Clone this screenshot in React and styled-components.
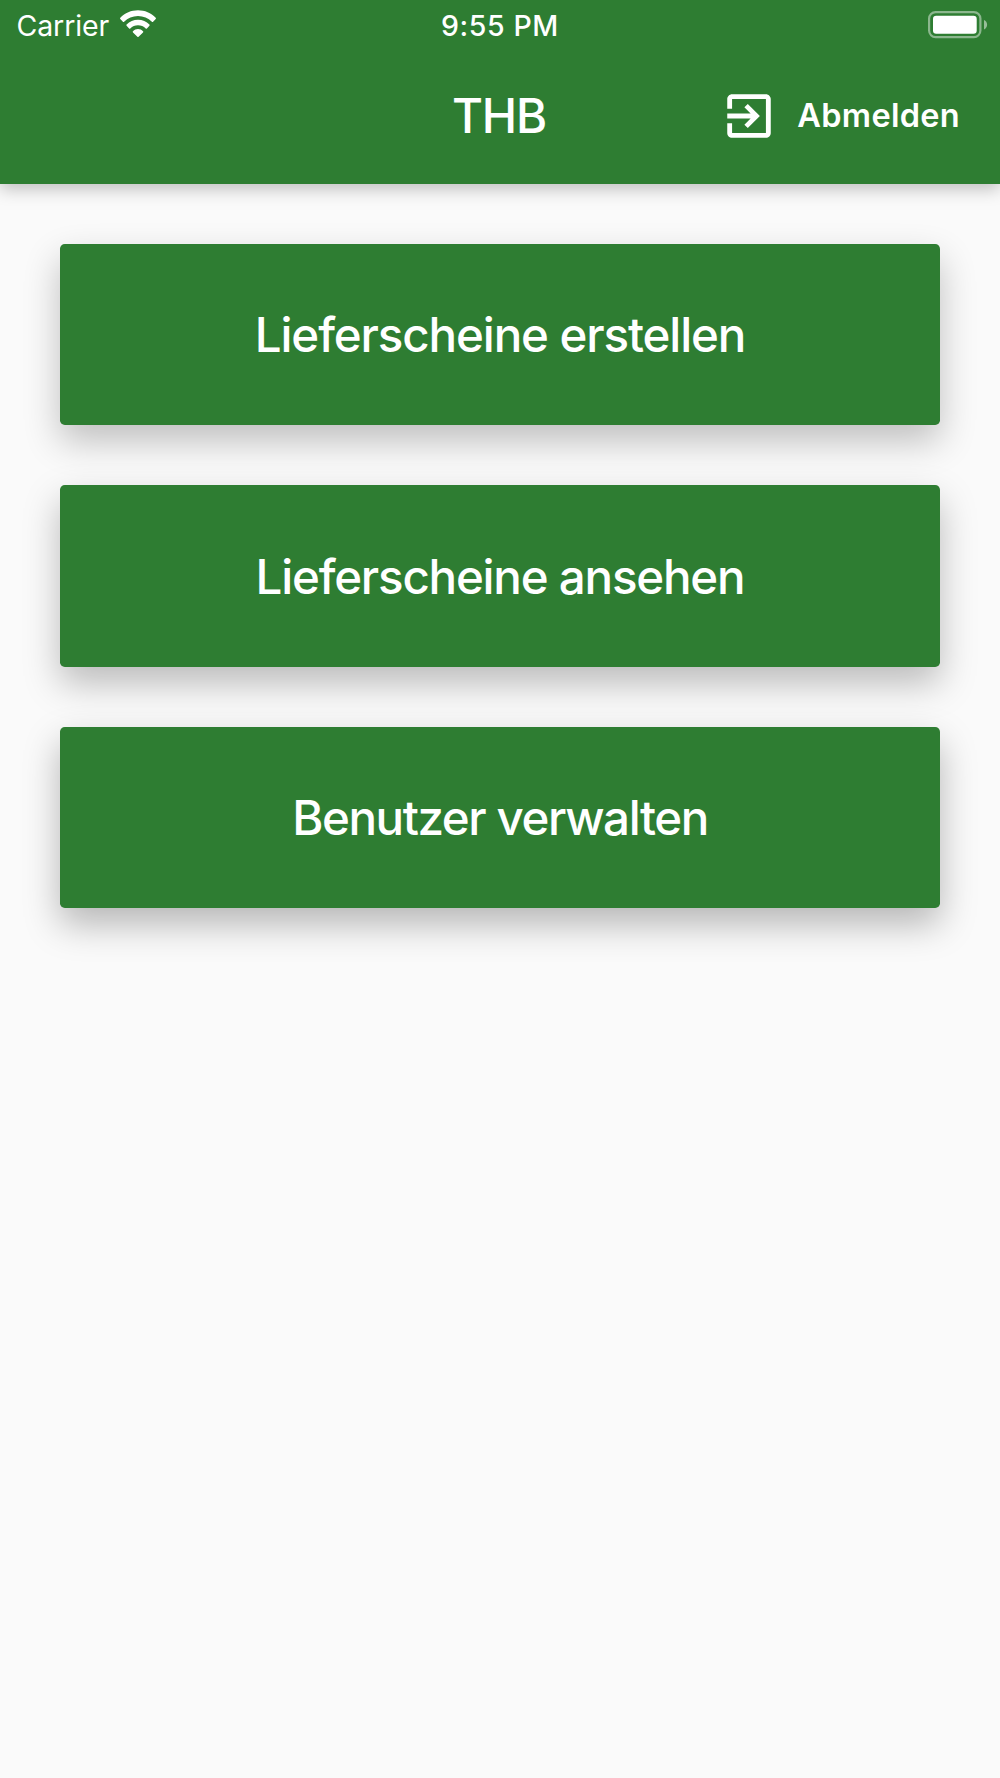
import React from 'react'
import styled, { createGlobalStyle } from 'styled-components'

const menuItems = [
  { id: 'create', label: 'Lieferscheine erstellen', spacing: '-1.12px', shade: 0.24 },
  { id: 'view', label: 'Lieferscheine ansehen', spacing: '-1.22px', shade: 0.26 },
  { id: 'users', label: 'Benutzer verwalten', spacing: '-1.43px', shade: 0.28 },
]

const WifiIcon = () => (
  <WifiSvg viewBox="0 0 36 27" fill="#fff">
    <path d="M.3 8.900Q-.3 8.300.3 7.700C5 2.900 11.200.2 18 .2s13 2.700 17.700 7.500q.6.6 0 1.200l-2.600 2.800q-.6.6-1.200 0C28.200 8 23.400 5.900 18 5.900S7.800 8 4.100 11.700q-.6.6-1.200 0z" />
    <path d="M6.600 15.800q-.6-.6 0-1.200c3-3.100 6.900-4.900 11.400-4.900s8.400 1.800 11.400 4.900q.6.6 0 1.200l-2.500 2.600q-.6.6-1.200 0c-2.100-2-4.700-3.100-7.700-3.100s-5.600 1.100-7.700 3.100q-.6.6-1.200 0z" />
    <path d="M13 22.400q-.6-.6 0-1.200c1.400-1.400 3.100-2.200 5-2.200s3.600.8 5 2.200q.6.6 0 1.200l-4.400 4.300q-.6.500-1.200 0z" />
  </WifiSvg>
)

const BatteryIcon = () => (
  <BatterySvg viewBox="0 0 60 28">
    <rect
      x="1.100"
      y="1.100"
      width="51.300"
      height="25"
      rx="6.500"
      fill="none"
      stroke="#fff"
      strokeOpacity="0.45"
      strokeWidth="2.200"
    />
    <rect x="5" y="4.700" width="43.700" height="18" rx="3.200" fill="#fff" />
    <path d="M56 9c1.900.8 3.100 2.600 3.100 4.700s-1.200 3.900-3.100 4.700z" fill="#fff" fillOpacity="0.5" />
  </BatterySvg>
)

const ExitIcon = () => (
  <ExitSvg viewBox="0 0 24 24" fill="#fff">
    <path d="M10.090 15.590L11.500 17l5-5-5-5-1.410 1.410L12.670 11H3v2h9.670l-2.580 2.590zM19 3H5c-1.110 0-2 .9-2 2v4h2V5h14v14H5v-4H3v4c0 1.100.89 2 2 2h14c1.100 0 2-.9 2-2V5c0-1.100-.9-2-2-2z" />
  </ExitSvg>
)

const App = () => {
  return (
    <>
      <GlobalStyle />
      <Screen>
        <Header>
          <StatusBar>
            <Carrier>
              <span>Carrier</span>
              <WifiIcon />
            </Carrier>
            <Clock>9:55 PM</Clock>
            <BatteryIcon />
          </StatusBar>
          <AppBar>
            <Title>THB</Title>
            <LogoutButton type="button">
              <ExitIcon />
              <span>Abmelden</span>
            </LogoutButton>
          </AppBar>
        </Header>
        <Menu>
          {menuItems.map(item => (
            <MenuButton
              key={item.id}
              type="button"
              $spacing={item.spacing}
              $shade={item.shade}>
              {item.label}
            </MenuButton>
          ))}
        </Menu>
      </Screen>
    </>
  )
}

const GlobalStyle = createGlobalStyle`
  * {
    box-sizing: border-box;
  }

  body {
    margin: 0;
    background: #fafafa;
    font-family: Inter, Roboto, 'Liberation Sans', sans-serif;
  }

  button {
    margin: 0;
    border: 0;
    font-family: inherit;
    cursor: pointer;
  }
`

const Screen = styled.div`
  min-height: 1778px;
  background: #fafafa;
  color: #fff;
`

const Header = styled.header`
  height: 183.600px;
  background: #2e7d32;
  box-shadow: 0 5px 16px rgba(0, 0, 0, 0.24);
`

const StatusBar = styled.div`
  display: grid;
  grid-template-columns: 1fr auto 1fr;
  align-items: start;
  height: 48.300px;
  padding: 0 12px;
`

const Carrier = styled.div`
  display: flex;
  gap: 11px;
  padding-left: 4.500px;
  font-size: 28.500px;
  line-height: 52px;
  letter-spacing: -0.1px;
`

const WifiSvg = styled.svg`
  width: 36px;
  height: 27px;
  margin-top: 10px;
`

const Clock = styled.div`
  font-size: 28.500px;
  font-weight: 550;
  line-height: 52px;
  letter-spacing: 0.600px;
`

const BatterySvg = styled.svg`
  justify-self: end;
  width: 60px;
  height: 28px;
  margin-top: 10.500px;
`

const AppBar = styled.div`
  display: grid;
  grid-template-columns: 1fr auto 1fr;
  align-items: center;
  height: 135.300px;
  padding: 0 40px 0 38px;
`

const Title = styled.h1`
  grid-column: 2;
  margin: 0;
  font-size: 47.500px;
  font-weight: 550;
  line-height: 58px;
  letter-spacing: -1.200px;
`

const LogoutButton = styled.button`
  display: flex;
  justify-self: end;
  align-items: center;
  gap: 19.300px;
  padding: 0;
  background: none;
  color: #fff;
  font-size: 32.500px;
  font-weight: 570;
  line-height: 40px;
  letter-spacing: 0.300px;
`

const ExitSvg = styled.svg`
  width: 58px;
  height: 58px;
`

const Menu = styled.main`
  display: flex;
  flex-direction: column;
  gap: 60.300px;
  padding: 60.400px;
`

const MenuButton = styled.button`
  height: 181.200px;
  padding: 0;
  border-radius: 4.800px;
  background: #2e7d32;
  box-shadow: 0 16px 36px rgba(0, 0, 0, ${props => props.$shade});
  color: #fff;
  font-size: 47.500px;
  font-weight: 550;
  letter-spacing: ${props => props.$spacing};
`

export default React.memo(App)
